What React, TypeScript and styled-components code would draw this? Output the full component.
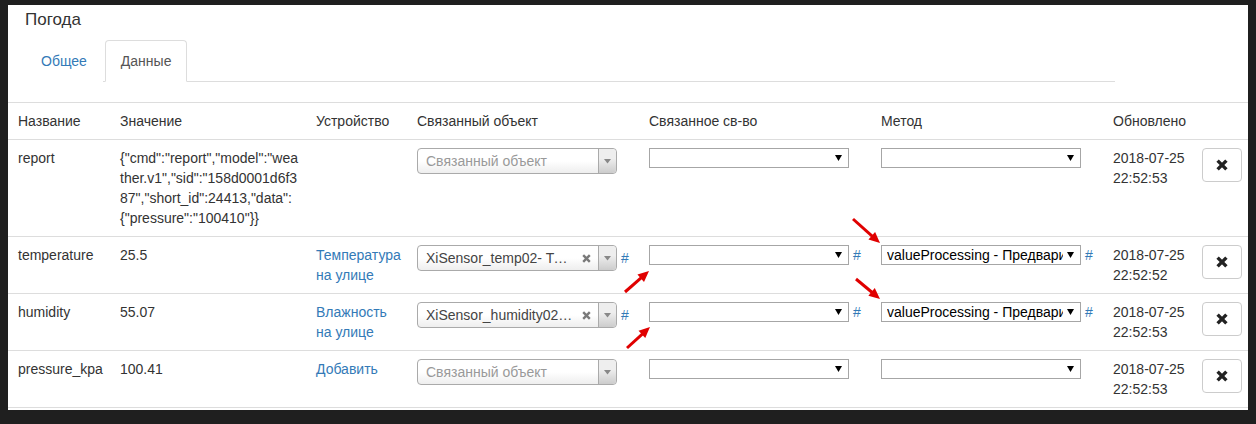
import React from "react";
import styled, { createGlobalStyle } from "styled-components";

const GlobalStyle = createGlobalStyle`
  html, body { margin: 0; padding: 0; background: #1f1f1f; }
  body {
    font-family: "Liberation Sans", Arial, sans-serif;
    font-size: 14px;
    line-height: 20px;
    color: #333;
  }
  * { box-sizing: border-box; }
`;

const Page = styled.div`
  position: relative;
  width: 1256px;
  height: 424px;
  padding: 5px 0 0 8px;
  overflow: hidden;
`;

const Panel = styled.div`
  width: 1240px;
  height: 405px;
  background: #fff;
  overflow: hidden;
`;

const Title = styled.h3`
  margin: 0;
  padding: 5px 0 0 17px;
  font-size: 17px;
  line-height: 20px;
  font-weight: normal;
  color: #333;
`;

const Tabs = styled.ul`
  display: flex;
  list-style: none;
  margin: 10px 0 0 17px;
  padding: 0;
  width: 1090px;
  border-bottom: 1px solid #ddd;
`;

const Tab = styled.li<{ $active?: boolean }>`
  margin-right: 2px;
  margin-bottom: -1px;
  padding: 10px 15px;
  line-height: 20px;
  border: 1px solid ${(p) => (p.$active ? "#ddd" : "transparent")};
  border-bottom-color: ${(p) => (p.$active ? "#fff" : "transparent")};
  border-radius: 4px 4px 0 0;
  background: #fff;
  color: ${(p) => (p.$active ? "#555" : "#337ab7")};
`;

const Table = styled.table`
  width: 100%;
  margin-top: 20px;
  border-collapse: collapse;
  table-layout: fixed;
`;

const Th = styled.th`
  padding: 8px;
  text-align: left;
  font-weight: normal;
  vertical-align: top;
  line-height: 20px;
  border-top: 1px solid #ddd;
  &:first-child { padding-left: 10px; }
`;

const Tr = styled.tr`
  &:last-child td { border-bottom: 1px solid #ddd; }
`;

const Td = styled.td`
  padding: 8px;
  vertical-align: top;
  line-height: 20px;
  border-top: 1px solid #ddd;
  &:first-child { padding-left: 10px; }
`;

const JsonText = styled.div`
  word-break: break-all;
`;

const Link = styled.a`
  color: #337ab7;
  text-decoration: none;
`;

const Field = styled.div`
  display: flex;
  align-items: center;
  gap: 4px;
`;

const S2Box = styled.div`
  display: flex;
  flex: none;
  width: 200px;
  height: 26px;
  border: 1px solid #aaa;
  border-radius: 4px;
  background: linear-gradient(to top, #eee 0%, #fff 50%);
  line-height: 24px;
`;

const S2Text = styled.span<{ $placeholder?: boolean }>`
  flex: 1;
  min-width: 0;
  padding-left: 8px;
  white-space: nowrap;
  overflow: hidden;
  text-overflow: ellipsis;
  color: ${(p) => (p.$placeholder ? "#999" : "#444")};
`;

const S2Clear = styled.span`
  width: 24px;
  display: flex;
  align-items: center;
  justify-content: center;
`;

const S2Arrow = styled.span`
  width: 18px;
  border-left: 1px solid #aaa;
  border-radius: 0 4px 4px 0;
  background: linear-gradient(to top, #ccc 0%, #eee 60%);
  display: flex;
  align-items: center;
  justify-content: center;
`;

const NSelect = styled.div`
  display: flex;
  flex: none;
  align-items: center;
  width: 200px;
  height: 20px;
  border: 1px solid #a6a6a6;
  background: #fff;
  font-size: 14px;
  line-height: 18px;
  color: #000;
  padding-left: 5px;
`;

const NValue = styled.span`
  flex: 1;
  min-width: 0;
  white-space: nowrap;
  overflow: hidden;
`;

const NArrow = styled.svg`
  flex: none;
  margin: 0 6px 0 4px;
`;

const DelBtn = styled.button`
  width: 40px;
  height: 34px;
  border: 1px solid #ccc;
  border-radius: 4px;
  background: #fff;
  display: flex;
  align-items: center;
  justify-content: center;
  padding: 0;
`;

const Overlay = styled.svg`
  position: absolute;
  left: 0;
  top: 0;
  pointer-events: none;
`;

const Select2: React.FC<{ value?: string }> = ({ value }) => (
  <S2Box>
    <S2Text $placeholder={!value}>{value || "Связанный объект"}</S2Text>
    {value && (
      <S2Clear>
        <svg width="9" height="9" viewBox="0 0 9 9">
          <path d="M1.2 1.2 L7.8 7.8 M7.8 1.2 L1.2 7.8" stroke="#7a7a7a" strokeWidth="2.4" />
        </svg>
      </S2Clear>
    )}
    <S2Arrow>
      <svg width="7" height="5" viewBox="0 0 7 5">
        <path d="M0 0 H7 L3.5 4.5 Z" fill="#888" />
      </svg>
    </S2Arrow>
  </S2Box>
);

const NativeSelect: React.FC<{ value?: string }> = ({ value }) => (
  <NSelect>
    <NValue>{value || ""}</NValue>
    <NArrow width="7" height="6" viewBox="0 0 7 6">
      <path d="M0 0 H7 L3.5 6 Z" fill="#000" />
    </NArrow>
  </NSelect>
);

const RemoveIcon = () => (
  <svg width="12" height="12" viewBox="0 0 12 12">
    <path d="M1.6 1.6 L10.4 10.4 M10.4 1.6 L1.6 10.4" stroke="#222" strokeWidth="3.4" />
  </svg>
);

type Row = {
  name: string;
  value: string;
  json?: boolean;
  device?: string[];
  obj?: string;
  hash: boolean;
  method?: string;
  date: string;
};

const rows: Row[] = [
  {
    name: "report",
    value: '{"cmd":"report","model":"weather.v1","sid":"158d0001d6f387","short_id":24413,"data":{"pressure":"100410"}}',
    json: true,
    hash: false,
    date: "2018-07-25 22:52:53",
  },
  {
    name: "temperature",
    value: "25.5",
    device: ["Температура", "на улице"],
    obj: "XiSensor_temp02- Температура на улице",
    hash: true,
    method: "valueProcessing - Предварительная обработка",
    date: "2018-07-25 22:52:52",
  },
  {
    name: "humidity",
    value: "55.07",
    device: ["Влажность", "на улице"],
    obj: "XiSensor_humidity02- Влажность на улице",
    hash: true,
    method: "valueProcessing - Предварительная обработка",
    date: "2018-07-25 22:52:53",
  },
  {
    name: "pressure_kpa",
    value: "100.41",
    device: ["Добавить"],
    hash: false,
    date: "2018-07-25 22:52:53",
  },
];

const arrows: [number, number, number, number][] = [
  [853, 219, 880, 243],
  [856, 279, 880, 299],
  [625, 292, 649, 271],
  [627, 348, 650, 327],
];

const Arrow: React.FC<{ a: [number, number, number, number] }> = ({ a }) => {
  const [x1, y1, x2, y2] = a;
  const dx = x2 - x1;
  const dy = y2 - y1;
  const len = Math.hypot(dx, dy);
  const ux = dx / len;
  const uy = dy / len;
  const hl = 11;
  const hw = 5;
  const bx = x2 - ux * hl;
  const by = y2 - uy * hl;
  const px = -uy;
  const py = ux;
  const pts = `${x2},${y2} ${bx + px * hw},${by + py * hw} ${bx - px * hw},${by - py * hw}`;
  return (
    <g>
      <line x1={x1} y1={y1} x2={bx + ux * 2} y2={by + uy * 2} stroke="#e00000" strokeWidth="3" />
      <polygon points={pts} fill="#e00000" />
    </g>
  );
};

export default function App() {
  return (
    <>
      <GlobalStyle />
      <Page>
        <Panel>
          <Title>Погода</Title>
          <Tabs>
            <Tab>Общее</Tab>
            <Tab $active>Данные</Tab>
          </Tabs>
          <Table>
            <colgroup>
              <col style={{ width: 104 }} />
              <col style={{ width: 196 }} />
              <col style={{ width: 101 }} />
              <col style={{ width: 232 }} />
              <col style={{ width: 232 }} />
              <col style={{ width: 232 }} />
              <col style={{ width: 89 }} />
              <col />
            </colgroup>
            <thead>
              <tr>
                <Th>Название</Th>
                <Th>Значение</Th>
                <Th>Устройство</Th>
                <Th>Связанный объект</Th>
                <Th>Связанное св-во</Th>
                <Th>Метод</Th>
                <Th>Обновлено</Th>
                <Th />
              </tr>
            </thead>
            <tbody>
              {rows.map((r) => (
                <Tr key={r.name}>
                  <Td>{r.name}</Td>
                  <Td>{r.json ? <JsonText>{r.value}</JsonText> : r.value}</Td>
                  <Td>
                    {r.device && (
                      <Link href="#">
                        {r.device.map((d, i) => (
                          <React.Fragment key={i}>
                            {i > 0 && " "}
                            {d}
                          </React.Fragment>
                        ))}
                      </Link>
                    )}
                  </Td>
                  <Td>
                    <Field>
                      <Select2 value={r.obj} />
                      {r.hash && <Link href="#">#</Link>}
                    </Field>
                  </Td>
                  <Td>
                    <Field>
                      <NativeSelect />
                      {r.hash && <Link href="#">#</Link>}
                    </Field>
                  </Td>
                  <Td>
                    <Field>
                      <NativeSelect value={r.method} />
                      {r.hash && <Link href="#">#</Link>}
                    </Field>
                  </Td>
                  <Td>{r.date}</Td>
                  <Td>
                    <DelBtn>
                      <RemoveIcon />
                    </DelBtn>
                  </Td>
                </Tr>
              ))}
            </tbody>
          </Table>
        </Panel>
        <Overlay width="1256" height="424" viewBox="0 0 1256 424">
          {arrows.map((a, i) => (
            <Arrow key={i} a={a} />
          ))}
        </Overlay>
      </Page>
    </>
  );
}
